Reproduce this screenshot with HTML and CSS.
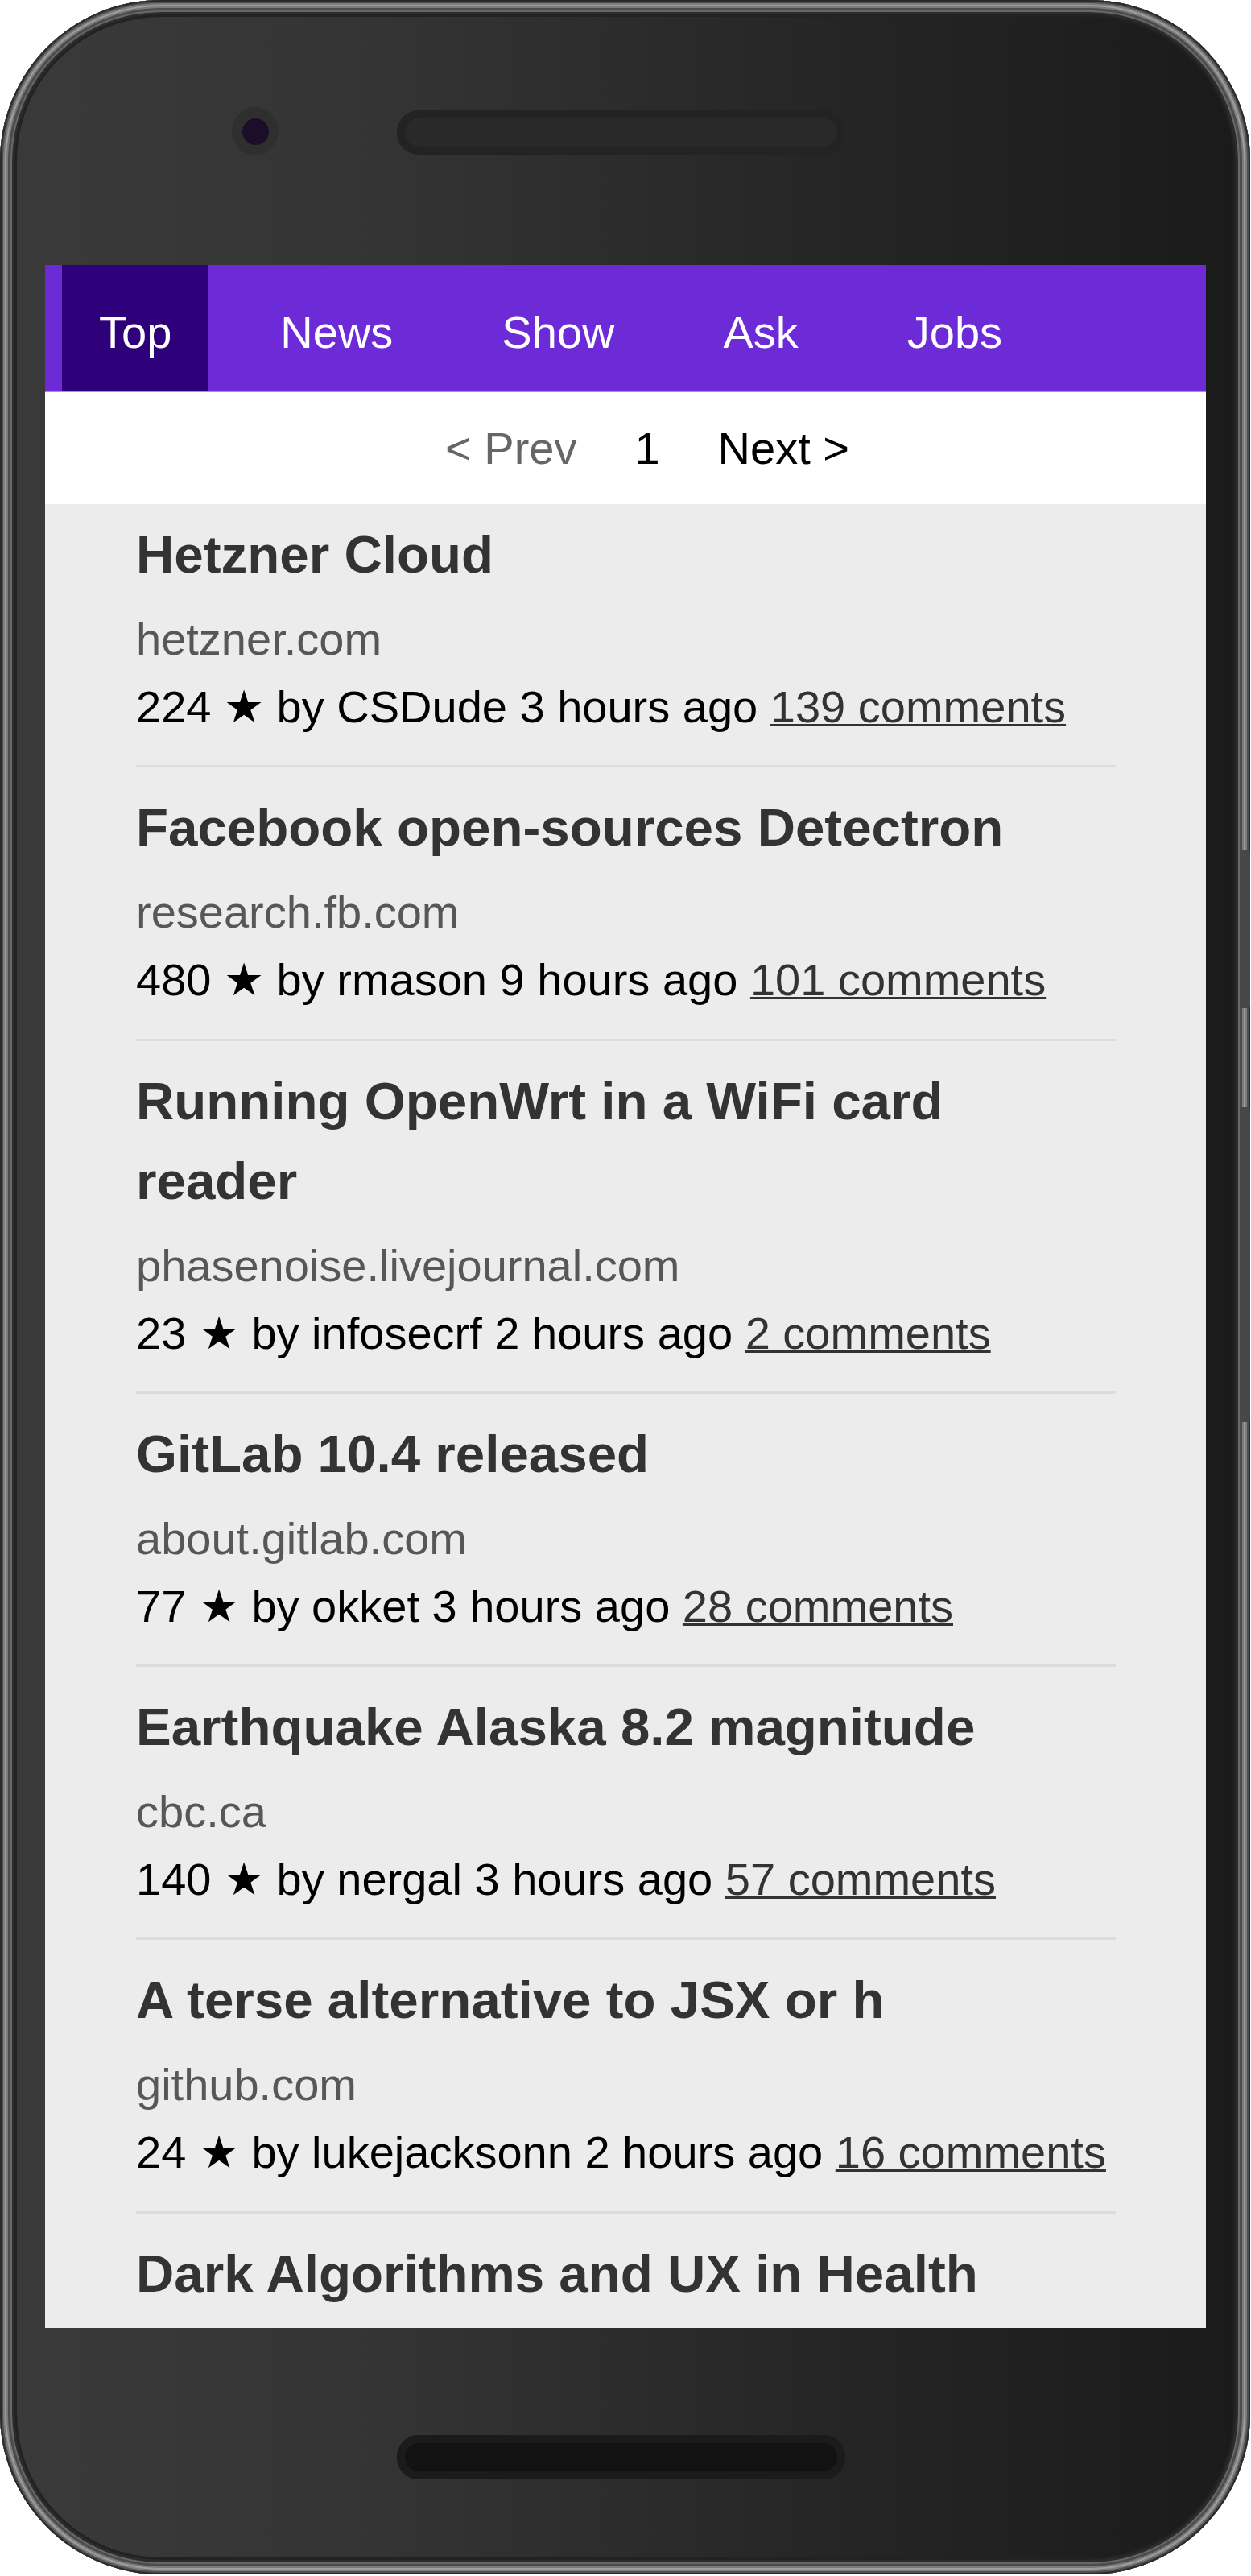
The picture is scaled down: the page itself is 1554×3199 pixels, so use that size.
FILE: index.html
```html
<!DOCTYPE html>
<html lang="en">
<head>
<meta charset="utf-8">
<title>Hacker News PWA</title>
<link rel="stylesheet" href="styles.css">
</head>
<body>
<div class="phone">
  <span class="side-btn side-btn-short"></span>
  <span class="side-btn side-btn-long"></span>
  <div class="bezel-top">
    <span class="camera"><span class="lens"></span></span>
    <span class="speaker"></span>
  </div>
  <div class="screen">
    <nav class="tabs">
      <a class="tab active" href="#">Top</a>
      <a class="tab" href="#">News</a>
      <a class="tab" href="#">Show</a>
      <a class="tab" href="#">Ask</a>
      <a class="tab" href="#">Jobs</a>
    </nav>
    <div class="pager">
      <span class="pager-prev">&lt; Prev</span>
      <span class="pager-num">1</span>
      <a class="pager-next" href="#">Next &gt;</a>
    </div>
    <ul class="stories">
      <li class="story">
        <h2 class="title">Hetzner Cloud</h2>
        <div class="domain">hetzner.com</div>
        <div class="meta">224 ★ by CSDude 3 hours ago <a href="#">139 comments</a></div>
      </li>
      <li class="story">
        <h2 class="title">Facebook open-sources Detectron</h2>
        <div class="domain">research.fb.com</div>
        <div class="meta">480 ★ by rmason 9 hours ago <a href="#">101 comments</a></div>
      </li>
      <li class="story">
        <h2 class="title">Running OpenWrt in a WiFi card reader</h2>
        <div class="domain">phasenoise.livejournal.com</div>
        <div class="meta">23 ★ by infosecrf 2 hours ago <a href="#">2 comments</a></div>
      </li>
      <li class="story">
        <h2 class="title">GitLab 10.4 released</h2>
        <div class="domain">about.gitlab.com</div>
        <div class="meta">77 ★ by okket 3 hours ago <a href="#">28 comments</a></div>
      </li>
      <li class="story">
        <h2 class="title">Earthquake Alaska 8.2 magnitude</h2>
        <div class="domain">cbc.ca</div>
        <div class="meta">140 ★ by nergal 3 hours ago <a href="#">57 comments</a></div>
      </li>
      <li class="story">
        <h2 class="title">A terse alternative to JSX or h</h2>
        <div class="domain">github.com</div>
        <div class="meta">24 ★ by lukejacksonn 2 hours ago <a href="#">16 comments</a></div>
      </li>
      <li class="story">
        <h2 class="title">Dark Algorithms and UX in Health</h2>
      </li>
    </ul>
  </div>
  <div class="bezel-bottom">
    <span class="speaker speaker-bottom"></span>
  </div>
</div>
</body>
</html>
```
FILE: styles.css
```css
* {
  box-sizing: border-box;
}

html,
body {
  margin: 0;
  padding: 0;
  background: #ffffff;
}

body {
  font-family: "Liberation Sans", Arial, sans-serif;
}

/* ---------- phone frame ---------- */
.phone {
  position: relative;
  width: 1553px;
  height: 3197px;
  padding: 0 55px 0 56px;
  border-radius: 200px;
  background: linear-gradient(to right, #3a3a3a 0%, #343434 30%, #262626 65%, #1a1a1a 100%);
  box-shadow:
    inset 0 0 0 2px #2a2a2a,
    inset 0 0 0 4px #505050,
    inset 0 0 0 6px #7c7c7c,
    inset 0 0 0 8px #9e9e9e,
    inset 0 0 0 10px #7a7a7a,
    inset 0 0 0 13px #4c4c4c,
    inset 0 0 0 15px #686868,
    inset 0 0 0 18px #2c2c2c,
    inset 0 0 0 21px #222222;
  display: flex;
  flex-direction: column;
}

.side-btn {
  position: absolute;
  right: 0;
  width: 13px;
  background: #474747;
  border-radius: 0 3px 3px 0;
}

.side-btn-short {
  top: 1056px;
  height: 196px;
}

.side-btn-long {
  top: 1375px;
  height: 391px;
}

.bezel-top {
  height: 329px;
  flex: none;
  display: flex;
  align-items: center;
  padding-left: 232px;
}

.camera {
  width: 58px;
  height: 60px;
  border-radius: 50%;
  background: #2f2f2f;
  display: flex;
  align-items: center;
  justify-content: center;
  margin-top: -3px;
}

.lens {
  width: 33px;
  height: 33px;
  border-radius: 50%;
  background: #1a0e2a;
}

.speaker {
  margin-left: 147px;
  width: 557px;
  height: 55px;
  border-radius: 28px;
  background: #292929;
  box-shadow: inset 0 0 0 10px #232323;
}

.bezel-bottom {
  flex: 1;
  padding-top: 133px;
  padding-left: 437px;
}

.speaker-bottom {
  display: block;
  margin-left: 0;
  background: #121212;
  box-shadow: inset 0 0 0 10px #1b1b1b;
}

/* ---------- screen ---------- */
.screen {
  flex: none;
  width: 1442px;
  height: 2562px;
  overflow: hidden;
  background: #ececec;
  display: flex;
  flex-direction: column;
}

.tabs {
  flex: none;
  display: flex;
  height: 158px;
  padding-left: 21px;
  gap: 43px;
  background: #6c2bd7;
  border-bottom: 1px solid #a98ddb;
}

.tab {
  display: flex;
  align-items: center;
  padding: 9px 46px 0;
  color: #ffffff;
  font-size: 56px;
  text-decoration: none;
}

.tab.active {
  background: #2e0079;
}

.pager {
  flex: none;
  height: 139px;
  background: #ffffff;
  display: flex;
  justify-content: center;
  align-items: center;
  gap: 72px;
  padding-left: 54px;
  font-size: 56px;
}

.pager-prev {
  color: #666666;
}

.pager-num {
  color: #000000;
}

.pager-next {
  color: #000000;
  text-decoration: none;
}

.stories {
  list-style: none;
  margin: 0;
  padding: 0 112px 0 113px;
}

.story {
  padding: 25px 0 30.25px;
  border-bottom: 3px solid #dcdcdc;
}

.story:first-child {
  padding-top: 13px;
}

.title {
  margin: 0;
  font-size: 65.5px;
  line-height: 99px;
  font-weight: bold;
  color: #333333;
}

.domain {
  margin-top: 14px;
  font-size: 56px;
  line-height: 84px;
  color: #575757;
}

.meta {
  font-size: 56px;
  line-height: 84px;
  color: #000000;
  white-space: nowrap;
}

.meta a {
  color: #333333;
  text-decoration: underline;
  text-decoration-thickness: 3px;
}
```
